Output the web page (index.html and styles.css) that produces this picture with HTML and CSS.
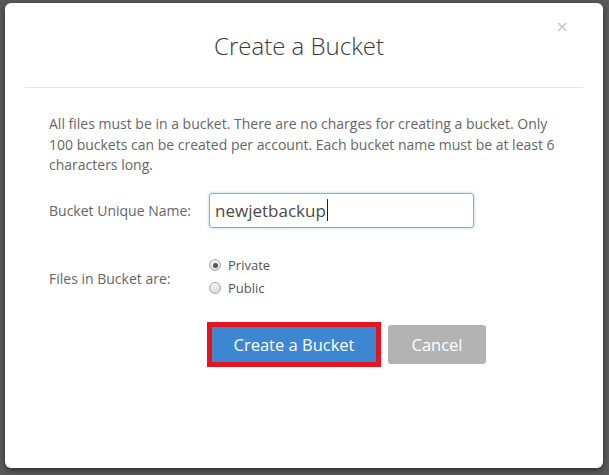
FILE: index.html
```html
<!DOCTYPE html>
<html lang="en">
<head>
    <meta charset="UTF-8">
    <meta name="viewport" content="width=device-width, initial-scale=1.0">
    <title>Create a Bucket</title>
    <link rel="stylesheet" href="styles.css">
</head>
<body>

    <div class="backdrop">
        <div class="modal">
            <div class="modal-header">
                <h2 class="modal-title">Create a Bucket</h2>
                <button class="close">&times;</button>
            </div>

            <div class="modal-body">
                <p class="intro">All files must be in a bucket. There are no charges for creating a bucket. Only 100 buckets can be created per account. Each bucket name must be at least 6 characters long.</p>

                <form action="">
                    <div class="form-row">
                        <label class="control-label" for="bucket_name">Bucket Unique Name:</label>
                        <div class="field">
                            <div class="text-input">newjetbackup<span class="caret"></span></div>
                        </div>
                    </div>

                    <div class="form-row radios-row">
                        <label class="control-label">Files in Bucket are:</label>
                        <div class="radios">
                            <label class="radio"><span class="dot checked"></span>Private</label>
                            <label class="radio"><span class="dot"></span>Public</label>
                        </div>
                    </div>

                    <div class="actions">
                        <button type="button" class="btn btn-primary">Create a Bucket</button>
                        <button type="button" class="btn btn-cancel">Cancel</button>
                    </div>
                </form>
            </div>
        </div>
    </div>

</body>
</html>
```

FILE: styles.css
```css
body {
    margin: 0;
    background-color: #5a5a5a;
    font-family: "Open Sans", "Liberation Sans", sans-serif;
}

.backdrop {
    padding: 3px 6px 7px 5px;
}

.modal {
    height: 465px;
    background-color: #fff;
    border-radius: 6px;
    box-shadow: 0 2px 6px rgba(0, 0, 0, 0.5);
}

.modal-header {
    margin: 0 20px;
    padding-right: 10px;
    height: 84px;
    border-bottom: 1px solid #e5e5e5;
    display: flex;
    align-items: center;
    justify-content: center;
    position: relative;
}

.modal-title {
    margin: 0;
    font-size: 24px;
    font-weight: 300;
    color: #3a3a3a;
}

.close {
    position: absolute;
    top: 14px;
    right: 15px;
    border: none;
    background: none;
    padding: 0;
    font-family: inherit;
    font-size: 20px;
    line-height: 20px;
    color: #c4c4c4;
}

.modal-body {
    padding: 26px 44px 0 44px;
}

.intro {
    margin: 0;
    font-size: 14px;
    line-height: 20.5px;
    color: #666;
}

.form-row {
    display: flex;
    align-items: center;
    margin-top: 17px;
}

.control-label {
    width: 160px;
    font-size: 14px;
    color: #666;
}

.text-input {
    box-sizing: border-box;
    width: 265px;
    height: 35px;
    border: 1px solid #7fb0e6;
    border-radius: 3px;
    box-shadow: 0 0 3px rgba(102, 160, 230, 0.6);
    padding: 4px 5px;
    font-size: 17px;
    line-height: 25px;
    color: #4a4a4a;
    display: flex;
    align-items: center;
}

.caret {
    display: inline-block;
    width: 1px;
    height: 22px;
    margin-left: 1px;
    background-color: #222;
}

.radios-row {
    align-items: flex-start;
    margin-top: 26px;
}

.radios-row .control-label {
    padding-top: 15px;
}

.radios {
    display: flex;
    flex-direction: column;
}

.radio {
    display: flex;
    align-items: center;
    height: 23px;
    font-size: 13px;
    color: #555;
}

.dot {
    box-sizing: border-box;
    width: 12px;
    height: 12px;
    border-radius: 50%;
    border: 1px solid #a9a9a9;
    background: linear-gradient(#f2f2f2, #dcdcdc);
    margin: 0 7px 0 0;
    position: relative;
}

.dot.checked::after {
    content: "";
    position: absolute;
    left: 2.5px;
    top: 2.5px;
    width: 5px;
    height: 5px;
    border-radius: 50%;
    background-color: #555;
}

.actions {
    display: flex;
    align-items: center;
    gap: 12px;
    margin-top: 25px;
    padding-left: 163px;
}

.btn {
    border: none;
    border-radius: 3px;
    font-family: inherit;
    font-size: 16.5px;
    color: #fff;
    padding: 0;
}

.btn-primary {
    width: 164px;
    height: 35px;
    background-color: #3d87d2;
    border-radius: 0;
    outline: 5px solid #e3161f;
    outline-offset: 0;
}

.btn-cancel {
    width: 98px;
    height: 39px;
    background-color: #b3b3b3;
}
```
